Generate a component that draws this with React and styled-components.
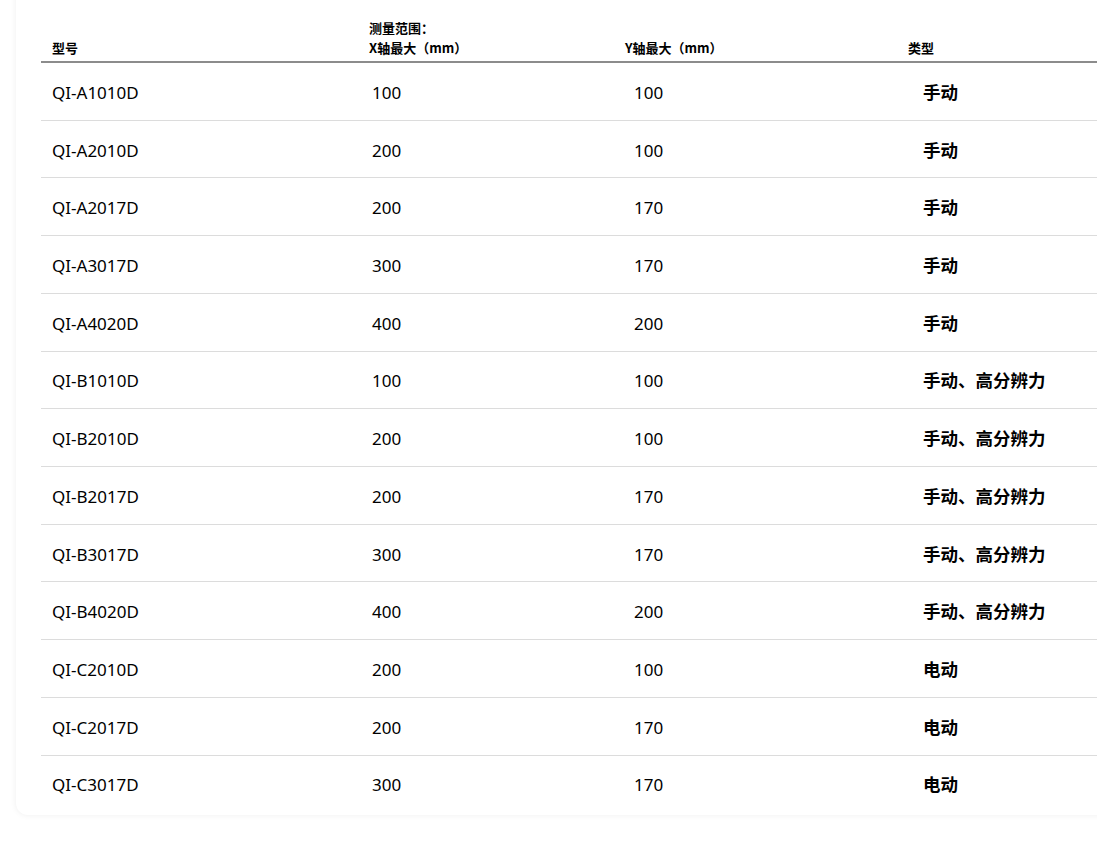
import React from "react";
import styled, { createGlobalStyle } from "styled-components";

const Global = createGlobalStyle`
  html, body { margin: 0; padding: 0; background: #fff; overflow: hidden; }
  body { font-family: "Noto Sans", "Noto Sans CJK SC", sans-serif; color: #000; }
`;

const Page = styled.div`
  width: 1097px;
  height: 846px;
  overflow: hidden;
  position: relative;
`;

const Card = styled.div`
  margin: -20px 0 0 16px;
  width: 1120px;
  padding: 20px 0 3px 25px;
  background: #fff;
  border-radius: 12px;
  box-shadow: 0 0 6px rgba(0, 0, 0, 0.07);
`;

const cols = "317px 256px 283px 1fr";

const HeadRow = styled.div`
  display: grid;
  grid-template-columns: ${cols};
  border-bottom: 2px solid #8c8c8c;
  height: 61px;
`;

const HeadCell = styled.div`
  display: flex;
  flex-direction: column;
  justify-content: flex-end;
  padding: 0 0 3px 11px;
  font-size: 13px;
  line-height: 20px;
  font-weight: 600;
  font-family: "Noto Sans CJK SC", "Noto Sans", sans-serif;
`;

const Row = styled.div`
  display: grid;
  grid-template-columns: ${cols};
  height: 56.73px;
  align-items: center;
  border-bottom: ${(p) => (p.$last ? "none" : "1px solid #dcdcdc")};
`;

const Cell = styled.div`
  padding-left: ${(p) => p.$pad}px;
  font-size: ${(p) => (p.$bold ? 17.5 : 17)}px;
  font-weight: ${(p) => (p.$bold ? 700 : 400)};
  font-family: ${(p) =>
    p.$bold
      ? `"Noto Sans CJK SC", sans-serif`
      : `"Noto Sans", "Noto Sans CJK SC", sans-serif`};
  padding-top: ${(p) => (p.$bold ? 0 : 2)}px;
  white-space: nowrap;
`;

const data = [
  ["QI-A1010D", "100", "100", "手动"],
  ["QI-A2010D", "200", "100", "手动"],
  ["QI-A2017D", "200", "170", "手动"],
  ["QI-A3017D", "300", "170", "手动"],
  ["QI-A4020D", "400", "200", "手动"],
  ["QI-B1010D", "100", "100", "手动、高分辨力"],
  ["QI-B2010D", "200", "100", "手动、高分辨力"],
  ["QI-B2017D", "200", "170", "手动、高分辨力"],
  ["QI-B3017D", "300", "170", "手动、高分辨力"],
  ["QI-B4020D", "400", "200", "手动、高分辨力"],
  ["QI-C2010D", "200", "100", "电动"],
  ["QI-C2017D", "200", "170", "电动"],
  ["QI-C3017D", "300", "170", "电动"],
];

export default function App() {
  return (
    <Page>
      <Global />
      <Card>
        <HeadRow>
          <HeadCell>型号</HeadCell>
          <HeadCell>
            <span>测量范围：</span>
            <span>X轴最大（mm）</span>
          </HeadCell>
          <HeadCell>Y轴最大（mm）</HeadCell>
          <HeadCell>类型</HeadCell>
        </HeadRow>
        {data.map((r, i) => (
          <Row key={r[0]} $last={i === data.length - 1}>
            <Cell $pad={11}>{r[0]}</Cell>
            <Cell $pad={14}>{r[1]}</Cell>
            <Cell $pad={20}>{r[2]}</Cell>
            <Cell $pad={26} $bold>{r[3]}</Cell>
          </Row>
        ))}
      </Card>
    </Page>
  );
}
